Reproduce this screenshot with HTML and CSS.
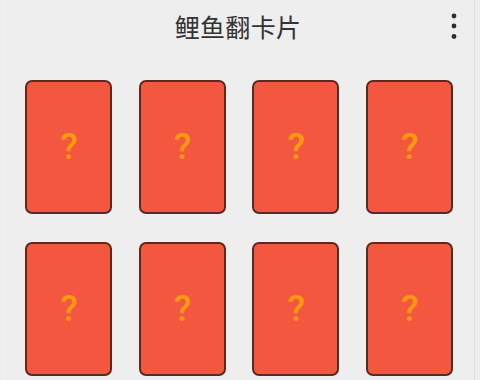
FILE: index.html
```html
<!DOCTYPE html>
<html lang="zh">
<head>
<meta charset="utf-8">
<title>鲤鱼翻卡片</title>
<link rel="stylesheet" href="styles.css">
</head>
<body>
<div class="app">
  <header class="topbar">
    <h1 class="title">鲤鱼翻卡片</h1>
    <button class="menu" aria-label="更多">
      <svg width="8" height="28" viewBox="0 0 8 28"><circle cx="4" cy="4" r="2.4"/><circle cx="4" cy="14" r="2.4"/><circle cx="4" cy="24.5" r="2.4"/></svg>
    </button>
  </header>
  <main class="board">
    <div class="card"><span class="mark">?</span></div>
    <div class="card"><span class="mark">?</span></div>
    <div class="card"><span class="mark">?</span></div>
    <div class="card"><span class="mark">?</span></div>
    <div class="card"><span class="mark">?</span></div>
    <div class="card"><span class="mark">?</span></div>
    <div class="card"><span class="mark">?</span></div>
    <div class="card"><span class="mark">?</span></div>
  </main>
</div>
</body>
</html>
```

FILE: styles.css
```css
html, body {
  margin: 0;
  padding: 0;
  background: #eeeeee;
}
body {
  font-family: "Noto Sans", "Noto Sans CJK SC", sans-serif;
  width: 480px;
  height: 380px;
  overflow: hidden;
}
.app {
  height: 380px;
  box-sizing: border-box;
  border-left: 1px solid #f3f3f3;
  border-right: 1px solid #dcdcdc;
  margin: 0 5px 0 3px;
  background: #eeeeee;
}
.topbar {
  position: relative;
  height: 54px;
  display: flex;
  align-items: center;
  justify-content: center;
}
.title {
  margin: 0;
  font-family: "Noto Sans CJK SC", sans-serif;
  font-size: 25px;
  font-weight: 400;
  color: #333333;
  letter-spacing: 0.3px;
  line-height: 1;
  margin-top: -1px;
  margin-left: -2px;
}
.menu {
  position: absolute;
  right: 16px;
  top: 12px;
  border: 0;
  background: none;
  padding: 0;
  width: 8px;
  height: 28px;
  fill: #2e2e2e;
}
.menu svg { display: block; }
.board {
  display: grid;
  grid-template-columns: repeat(4, 87px);
  grid-auto-rows: 134px;
  column-gap: 26.6px;
  row-gap: 28px;
  padding: 26px 0 0 21px;
}
.card {
  box-sizing: border-box;
  background: #f3573f;
  border: 2px solid #5a2a22;
  border-radius: 7px;
  display: flex;
  align-items: center;
  justify-content: center;
}
.mark {
  font-family: "Roboto", "Liberation Sans", sans-serif;
  font-size: 36px;
  font-weight: 500;
  color: #ff9a10;
  line-height: 1;
  margin-left: 1px;
}
```
